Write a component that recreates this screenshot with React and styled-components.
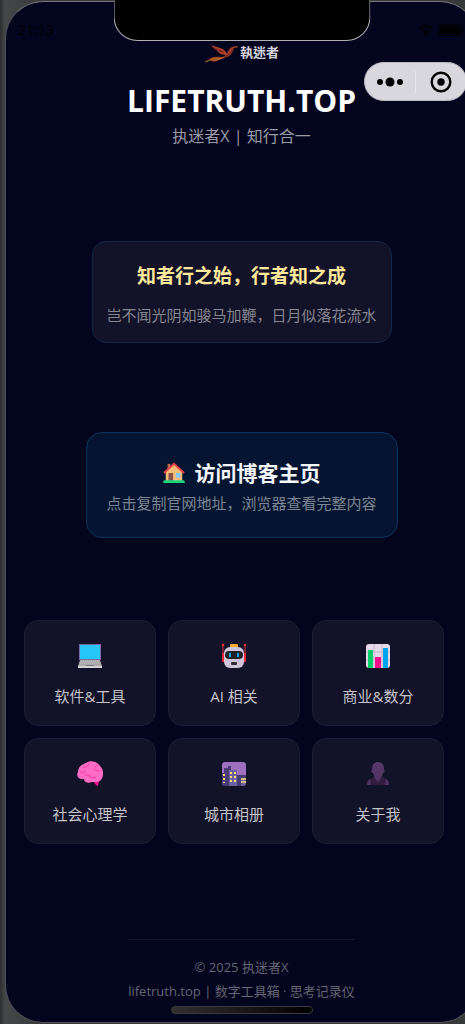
import React from "react";
import styled, { createGlobalStyle } from "styled-components";

const GlobalStyle = createGlobalStyle`
  *, *::before, *::after { box-sizing: border-box; }
  body {
    margin: 0;
    background: #38393b;
    font-family: "Open Sans", "Noto Sans CJK SC", sans-serif;
  }
  button { font: inherit; color: inherit; cursor: pointer; }
  h1, h2, p { margin: 0; }
  svg { display: block; }
`;

const Frame = styled.div`
  position: relative;
  min-height: 100vh;
  display: flex;
  overflow: hidden;
  padding: 1px 0 1px 5px;
  background: linear-gradient(90deg, #2c2d2f 0, #454648 5px, #38393b 40px);
`;

const Screen = styled.div`
  position: relative;
  flex: 1 0 auto;
  width: calc(100% + 13px);
  margin-right: -13px;
  display: flex;
  flex-direction: column;
  border: 1px solid #4c4d52;
  border-top-color: #77787c;
  border-bottom-color: #55565a;
  border-radius: 38px;
  background: #03041d;
`;

const Notch = styled.div`
  position: absolute;
  top: -3px;
  left: 50%;
  width: 257px;
  height: 42px;
  transform: translateX(-50%);
  background: #000;
  border: 1px solid #b0b0b4;
  border-top: 0;
  border-radius: 0 0 24px 24px;
`;

const StatusBar = styled.div`
  display: flex;
  justify-content: space-between;
  align-items: center;
  height: 40px;
  padding: 16px 12px 0 12px;
  color: #000;
  font-size: 14px;
  line-height: 20px;
`;

const StatusIcons = styled.div`
  display: flex;
  align-items: center;
  gap: 5px;
`;

const Capsule = styled.div`
  position: absolute;
  top: 60px;
  right: 10px;
  display: flex;
  align-items: center;
  width: 103px;
  height: 39px;
  border: 1px solid #b9b8bf;
  border-radius: 20px;
  background: #d8d7dd;
`;

const CapsuleButton = styled.button`
  flex: 1;
  display: flex;
  justify-content: center;
  padding: 0;
  border: 0;
  background: none;
  & + & { border-left: 1px solid #e8e7ec; }
`;

const Header = styled.header`
  display: flex;
  flex-direction: column;
  align-items: center;
`;

const Brand = styled.div`
  display: flex;
  align-items: center;
  gap: 2px;
  height: 22px;
  color: #d5d5dc;
  font-family: "Liberation Serif", "Noto Sans CJK TC", serif;
  font-size: 13px;
  font-weight: 700;
  line-height: 20px;
`;

const Title = styled.h1`
  margin-top: 17px;
  color: #fff;
  font-size: 30px;
  line-height: 40px;
`;

const Subtitle = styled.p`
  margin-top: 3px;
  color: #9b9ba5;
  font-size: 16px;
  line-height: 24px;
`;

const Quote = styled.section`
  align-self: center;
  width: 300px;
  margin-top: 93px;
  padding: 20px 12px 15px;
  border: 1px solid #102847;
  border-radius: 14px;
  background: #121228;
  text-align: center;
`;

const QuoteTitle = styled.h2`
  color: #ffe79b;
  font-size: 19px;
  line-height: 28px;
`;

const Note = styled.p`
  margin-top: ${(p) => p.$gap};
  color: ${(p) => p.$color};
  font-size: 15px;
  line-height: 24px;
  white-space: nowrap;
`;

const HomeButton = styled.button`
  align-self: center;
  width: 312px;
  height: 106px;
  margin-top: 89px;
  padding: 2px 0 0;
  border: 1px solid #0a355d;
  border-radius: 16px;
  background: #051531;
`;

const HomeLabel = styled.div`
  display: flex;
  justify-content: center;
  align-items: center;
  gap: 10px;
  color: #f4f6fa;
  font-size: 21px;
  font-weight: 700;
  line-height: 30px;
`;

const Grid = styled.nav`
  display: grid;
  grid-template-columns: repeat(3, 1fr);
  gap: 12px;
  margin: 82px 33px 0 18px;
`;

const Tile = styled.button`
  display: flex;
  flex-direction: column;
  align-items: center;
  justify-content: center;
  gap: 15px;
  height: 106px;
  padding: 5px 0 0;
  border: 1px solid #1d1d32;
  border-radius: 14px;
  background: #121228;
  color: #c4c4ca;
  font-size: 15px;
  line-height: 24px;
`;

const Footer = styled.footer`
  align-self: center;
  margin-top: 95px;
  padding: 15px 0 19px;
  border-top: 1px solid #171729;
  color: #656672;
  font-size: 13px;
  line-height: 24px;
  text-align: center;
`;

const HomeIndicator = styled.div`
  position: absolute;
  bottom: 8px;
  left: 50%;
  width: 142px;
  height: 8px;
  transform: translateX(-50%);
  border: 1px solid #3a3a3c;
  border-radius: 4px;
  background: linear-gradient(90deg, #303030, #000);
`;

const Phoenix = () => (
  <svg width="34" height="21" viewBox="0 0 34 21">
    <path d="M6 1c3 3 7 3 11 4 4 2 6 4 6 7-5 0-8-1-10-4 2 1 4 1 5 1-4-1-8-2-12-8z" fill="#8e2a22" />
    <path d="M9 3c5 3 10 2 13 8M13 7c3 3 6 3 9 4" fill="none" stroke="#d2603a" strokeWidth=".7" />
    <path d="M21 12c3-2 3-8 8-8l5-1-4 2c-1 6-5 10-11 10z" fill="#7d2a24" />
    <path d="M22 12c4-1 4-7 8-8h4" fill="none" stroke="#c04a2c" />
    <path d="M0 19c4-1 5-4 10-5 4-1 8 1 11-1-1 4-5 3-8 5-2 1-5 1-7-1-2 1-4 2-6 2z" fill="#8a3a22" />
    <path d="M1 19c5-1 7-4 11-4 3 0 5 1 8-1M8 17c3 1 5-1 8-1" fill="none" stroke="#cf8235" strokeWidth=".7" />
  </svg>
);

const House = () => (
  <svg width="22" height="22" viewBox="0 0 24 24">
    <path d="M5 2h3v7H5z" fill="#c66b4e" />
    <path d="M3 10 12 2l9 8v11H3z" fill="#f4bd78" />
    <path d="m1 12 11-10 11 10" fill="none" stroke="#ee4148" strokeWidth="2" />
    <path d="M6 12h5v9H6z" fill="#8b514b" />
    <path d="M14 12h5v5h-5z" fill="#86c8fa" />
    <path d="M1 20h22l1 3H0z" fill="#19d57c" />
  </svg>
);

const Laptop = () => (
  <svg width="26" height="26" viewBox="0 0 26 26">
    <path d="M2 1h22v16H2z" fill="#7769a5" />
    <path d="M3 2h20v14H3z" fill="#26c6fb" />
    <path d="M3 17h20l2 6H1z" fill="#aaa7aa" />
    <path d="M4 18h18M3 20h20" stroke="#c9c6c9" strokeDasharray="1 1" />
    <path d="M9 22h8v1H9z" fill="#77747a" />
    <path d="M1 23h24v2H1z" fill="#d4d2d5" />
  </svg>
);

const Robot = () => (
  <svg width="26" height="26" viewBox="0 0 26 26">
    <path d="M2 2v16M24 2v16" stroke="#e32832" />
    <circle cx="2" cy="2" r="1.3" fill="#f7333d" />
    <circle cx="24" cy="2" r="1.3" fill="#f7333d" />
    <rect x="1" y="10" width="3" height="9" rx="1" fill="#ef2935" />
    <rect x="22" y="10" width="3" height="9" rx="1" fill="#ef2935" />
    <rect x="9" y="1" width="8" height="5" rx="1" fill="#f9a82f" />
    <rect x="3" y="4" width="20" height="21" rx="6" fill="#cfc3d9" />
    <rect x="4" y="8" width="18" height="8" rx="4" fill="#202225" />
    <path d="M8 10h2v4H8zM16 10h2v4h-2z" fill="#00a6ed" />
    <rect x="10" y="19" width="6" height="3" rx="1" fill="#302d35" />
  </svg>
);

const Chart = () => (
  <svg width="26" height="26" viewBox="0 0 26 26">
    <rect x="1" y="1" width="24" height="24" rx="3" fill="#e3d9eb" />
    <path d="M1 9h24M1 17h24M9 1v24M17 1v24" stroke="#c5b7d1" />
    <path d="M3 7h5v18H3z" fill="#00cf6c" />
    <path d="M10 14h6v11h-6z" fill="#f70a8d" />
    <path d="M18 5h5v20h-5z" fill="#00a6ed" />
  </svg>
);

const Brain = () => (
  <svg width="26" height="26" viewBox="0 0 26 26">
    <path d="M17 19h5l-1 6c-3-1-4-3-4-6z" fill="#f70a8d" />
    <path d="M9 2C13-1 20 0 23 5c4 4 4 10 1 14-3 3-6 2-9 2-4 2-8 0-8-3-6 1-8-4-6-7 0-5 4-8 8-9z" fill="#ff6bc5" />
    <path d="M6 7c2-2 4 0 6-4M3 12c2-2 4 0 6-2M17 8c1 2 3 1 5 2M13 16c2 2 4-1 6 1M8 14c2-1 3 1 5 1M20 4l-2 2" fill="none" stroke="#f52da0" strokeWidth=".9" strokeLinecap="round" />
  </svg>
);

const City = () => (
  <svg width="26" height="26" viewBox="0 0 26 26">
    <rect x="1" y="1" width="24" height="24" rx="3" fill="#9e70bd" />
    <path d="M3 7h4V5h3v4h6v5h9v8c0 2-1 3-3 3H4c-2 0-3-1-3-3V12h2z" fill="#493b73" />
    <path d="M8 9h8v16H8zM20 17h5v6l-2 2h-3z" fill="#6b61a0" />
    <path d="M10 11v12M14 11v12M3 13v9" stroke="#ffe17c" strokeWidth="2" strokeDasharray="2 2" />
    <path d="M20 18h5M20 21h5" stroke="#f6dc79" strokeWidth="1.4" />
  </svg>
);

const Person = () => (
  <svg width="26" height="26" viewBox="0 0 26 26">
    <path d="M2 24c0-5 4-8 9-8h4c5 0 9 3 9 8z" fill="#321d3f" />
    <path d="M2 24c0-3 1-5 3-6l1 6zM24 24c0-3-1-5-3-6l-1 6zM9 14h8v2l-4 5-4-5z" fill="#503260" />
    <path d="M7 7c0-4 3-6 6-6s6 2 6 6v2c1 0 1 3-1 3-1 4-3 6-5 6s-4-2-5-6c-2 0-2-3-1-3z" fill="#533566" />
  </svg>
);

const tiles = [
  ["软件&工具", Laptop],
  ["AI 相关", Robot],
  ["商业&数分", Chart],
  ["社会心理学", Brain],
  ["城市相册", City],
  ["关于我", Person],
];

export default function App() {
  return (
    <Frame>
      <GlobalStyle />
      <Screen>
        <Notch />
        <StatusBar>
          <span>21:13</span>
          <StatusIcons>
            <svg width="14" height="11" viewBox="0 0 14 11" fill="none" stroke="#000" strokeWidth="2">
              <path d="M1 4c4-4 8-4 12 0M3 7c3-2 5-2 8 0" />
              <circle cx="7" cy="9" r="1" fill="#000" />
            </svg>
            <svg width="27" height="12" viewBox="0 0 27 12">
              <rect x=".5" y=".5" width="23" height="11" rx="2" fill="none" stroke="#000" />
              <rect x="2" y="2" width="20" height="8" rx="1" />
              <path d="M25 4h1v4h-1z" />
            </svg>
          </StatusIcons>
        </StatusBar>
        <Header>
          <Brand>
            <Phoenix />
            <span>執迷者</span>
          </Brand>
          <Title>LIFETRUTH.TOP</Title>
          <Subtitle>执迷者X | 知行合一</Subtitle>
        </Header>
        <Capsule>
          <CapsuleButton aria-label="更多">
            <svg width="28" height="22" viewBox="0 0 28 22">
              <circle cx="4" cy="11" r="3" />
              <circle cx="14" cy="11" r="4.5" />
              <circle cx="24" cy="11" r="3" />
            </svg>
          </CapsuleButton>
          <CapsuleButton aria-label="关闭">
            <svg width="22" height="22" viewBox="0 0 22 22">
              <circle cx="11" cy="11" r="9.3" fill="none" stroke="#000" strokeWidth="2.4" />
              <circle cx="11" cy="11" r="3.7" />
            </svg>
          </CapsuleButton>
        </Capsule>
        <Quote>
          <QuoteTitle>知者行之始，行者知之成</QuoteTitle>
          <Note $gap="13px" $color="#85858f">岂不闻光阴如骏马加鞭，日月似落花流水</Note>
        </Quote>
        <HomeButton>
          <HomeLabel>
            <House />
            <span>访问博客主页</span>
          </HomeLabel>
          <Note $gap="3px" $color="#7d8594">点击复制官网地址，浏览器查看完整内容</Note>
        </HomeButton>
        <Grid>
          {tiles.map(([label, Icon]) => (
            <Tile key={label}>
              <Icon />
              <span>{label}</span>
            </Tile>
          ))}
        </Grid>
        <Footer>
          <p>© 2025 执迷者X</p>
          <p>lifetruth.top | 数字工具箱 · 思考记录仪</p>
        </Footer>
        <HomeIndicator />
      </Screen>
    </Frame>
  );
}
